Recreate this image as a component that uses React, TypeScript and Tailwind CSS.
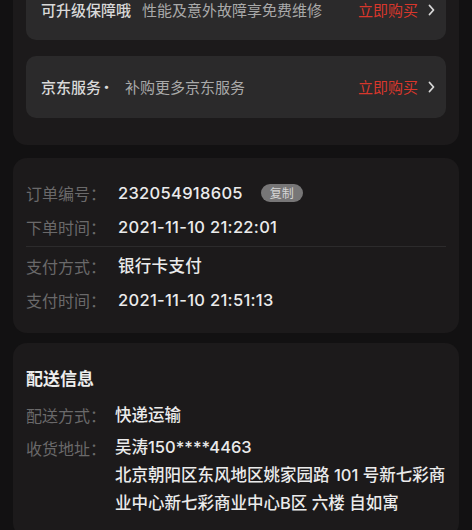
import React from "react";

const font = { fontFamily: '"Noto Sans CJK SC", "Noto Sans", sans-serif' };
const valFont = { fontFamily: '"Inter", "Noto Sans CJK SC", sans-serif' };

function Chevron() {
  return (
    <svg width="7" height="12" viewBox="0 0 7 12" className="ml-[10px]">
      <path d="M1.5 1.5 L5.5 6 L1.5 10.5" stroke="#d8d8d8" strokeWidth="1.8" fill="none" strokeLinecap="round" strokeLinejoin="round" />
    </svg>
  );
}

function Row({
  label,
  children,
  w = 92,
  wide = false,
}: {
  label: string;
  children: React.ReactNode;
  w?: number;
  wide?: boolean;
}) {
  return (
    <div className="flex items-start">
      <div className={`${w === 92 ? "w-[92px]" : "w-[89px]"} shrink-0 text-[16px] leading-[28px] text-[#6a696a]`}>{label}</div>
      <div
        className={`flex-1 text-[16.5px] leading-[28px] font-medium text-[#ebebeb] ${wide ? "tracking-[0.3px]" : ""}`}
        style={valFont}
      >
        {children}
      </div>
    </div>
  );
}

export default function App() {
  return (
    <div className="w-[472px] h-[530px] overflow-hidden bg-[#121112]" style={font}>
      {/* top card */}
      <div className="mx-[13px] -mt-[20px] rounded-b-[14px] bg-[#1c1a1b] px-[13px] pb-[27px]">
        <div className="flex h-[60px] items-end pb-[19px] rounded-b-[10px] bg-[#2b2a2b] pl-[15px] pr-[11px]">
          <div className="flex w-full items-center">
            <span className="text-[15px] font-medium text-[#d9d9d9]">可升级保障哦</span>
            <span className="ml-[11px] text-[15px] text-[#a9a9a9]">性能及意外故障享免费维修</span>
            <span className="ml-auto text-[15px] text-[#d8372c]">立即购买</span>
            <Chevron />
          </div>
        </div>
        <div className="mt-[16px] flex h-[62px] items-center rounded-[10px] bg-[#2b2a2b] pl-[15px] pr-[11px]">
          <span className="text-[15px] font-medium text-[#d9d9d9]">京东服务</span>
          <span className="text-[13px] font-bold text-[#d9d9d9] -ml-[1px]">•</span>
          <span className="ml-[12px] text-[15px] text-[#a9a9a9]">补购更多京东服务</span>
          <span className="ml-auto text-[15px] text-[#d8372c]">立即购买</span>
          <Chevron />
        </div>
      </div>

      {/* order card */}
      <div className="mx-[13px] mt-[13px] rounded-[14px] bg-[#1c1a1b] px-[13px] pt-[21px] pb-[19px]">
        <Row label="订单编号：" wide>
          <div className="flex items-center">
            <span>232054918605</span>
            <span
              className="ml-[18px] flex h-[18px] w-[42px] items-center justify-center rounded-full bg-[#777677] text-[12px] font-normal tracking-normal text-[#d4d4d4]"
              style={font}
            >
              复制
            </span>
          </div>
        </Row>
        <div className="mt-[6px]">
          <Row label="下单时间：" wide>2021-11-10 21:22:01</Row>
        </div>
        <div className="mt-[5px] h-px bg-[#2c2b2c]" />
        <div className="mt-[5px]">
          <Row label="支付方式：" wide>银行卡支付</Row>
        </div>
        <div className="mt-[6px]">
          <Row label="支付时间：" wide>2021-11-10 21:51:13</Row>
        </div>
      </div>

      {/* delivery card */}
      <div className="mx-[13px] mt-[10px] rounded-[14px] bg-[#1c1a1b] px-[13px] pt-[21px] pb-[20px]">
        <div className="text-[17px] font-bold leading-[28px] text-[#ededed]">配送信息</div>
        <div className="mt-[9px]">
          <Row label="配送方式：" w={89}>快递运输</Row>
        </div>
        <div className="mt-[5px]">
          <Row label="收货地址：" w={89}>
            <div className="leading-[27px]">吴涛150****4463</div>
            <div className="leading-[28px]">北京朝阳区东风地区姚家园路 101 号新七彩商业中心新七彩商业中心B区 六楼 自如寓</div>
          </Row>
        </div>
      </div>
    </div>
  );
}
